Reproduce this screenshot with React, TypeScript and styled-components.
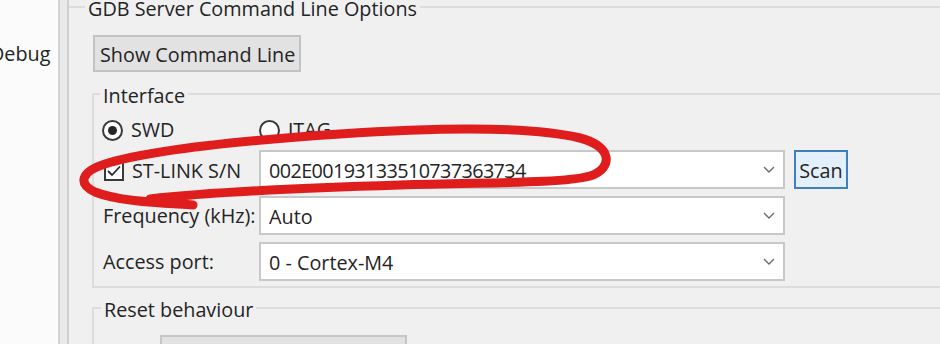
import React from "react";
import styled, { createGlobalStyle } from "styled-components";

const GlobalStyle = createGlobalStyle`
  html, body { margin: 0; padding: 0; background: #f0f0f0; }
  body {
    font-family: "Open Sans", "Noto Sans", "Liberation Sans", sans-serif;
    color: #242424;
  }
`;

const Frame = styled.div`
  position: relative;
  display: flex;
  width: 940px;
  height: 344px;
  overflow: hidden;
  background: #f0f0f0;
  font-size: 19.8px;
`;

const LeftPane = styled.div`
  flex: none;
  width: 58px;
  box-sizing: border-box;
  padding-top: 44px;
  background: #fbfbfb;
  overflow: hidden;
`;

const NavLabel = styled.div`
  line-height: 20px;
  text-indent: -10px;
  white-space: nowrap;
`;

const Sash = styled.div`
  flex: none;
  width: 11px;
  box-sizing: border-box;
  background: #e9e9e9;
  border-left: 2px solid #d3d3d3;
  border-right: 2px solid #d0d0d0;
`;

const Main = styled.div`
  flex: 1;
  min-width: 0;
  overflow: hidden;
  background: #f0f0f0;
`;

const Group = styled.fieldset<{ $top: number; $open?: boolean }>`
  margin: ${(p) => p.$top}px 0 0 0;
  padding: 0;
  min-width: 0;
  border: 2px solid #dcdcdc;
  border-right: none;
  ${(p) => (p.$open ? "border-left: none; border-bottom: none;" : "")}
`;

const Legend = styled.legend<{ $indent: number }>`
  margin-left: ${(p) => p.$indent}px;
  padding: 5px 3px 0;
  line-height: 20px;
  white-space: nowrap;
`;

const GdbBody = styled.div`
  padding-left: 23px;
`;

const ShowButton = styled.button`
  display: block;
  margin: 16px 0 0 1px;
  width: 208px;
  height: 37px;
  box-sizing: border-box;
  border: 2px solid #c3c3c3;
  background: #e2e2e2;
  padding: 3px 0 0 5px;
  font: inherit;
  line-height: 30px;
  color: inherit;
  text-align: left;
  white-space: nowrap;
  overflow: hidden;
`;

const GroupBody = styled.div<{ $pad: string }>`
  padding: ${(p) => p.$pad};
`;

const RadioRow = styled.div`
  display: grid;
  grid-template-columns: 157px 1fr;
  height: 22px;
  align-items: center;
`;

const Radio = styled.label`
  display: flex;
  align-items: center;
  gap: 8px;
  line-height: 20px;
  white-space: nowrap;
`;

const RadioCircle = styled.span<{ $checked?: boolean }>`
  display: grid;
  place-items: center;
  width: 21px;
  height: 21px;
  box-sizing: border-box;
  border: 2px solid #3a3a3a;
  border-radius: 50%;
  background: #fff;
  &::after {
    content: "";
    width: 9px;
    height: 9px;
    border-radius: 50%;
    background: ${(p) => (p.$checked ? "#262626" : "transparent")};
  }
`;

const FieldGrid = styled.div`
  display: grid;
  grid-template-columns: 148px 526px 54px;
  grid-auto-rows: 39px;
  column-gap: 9px;
  row-gap: 7px;
  margin-top: 9px;
  align-items: center;
`;

const FieldLabel = styled.span`
  padding-left: 1px;
  line-height: 20px;
  white-space: nowrap;
`;

const CheckLabel = styled.label`
  display: flex;
  align-items: center;
  gap: 8px;
  padding-left: 2px;
  padding-top: 2px;
  line-height: 20px;
  white-space: nowrap;
`;

const CheckBox = styled.span`
  display: grid;
  place-items: center;
  width: 20px;
  height: 20px;
  box-sizing: border-box;
  border: 2px solid #3a3a3a;
  background: #fff;
`;

const Combo = styled.div`
  display: flex;
  align-items: center;
  justify-content: space-between;
  height: 39px;
  box-sizing: border-box;
  border: 2px solid #c8c8c8;
  background: #fff;
  padding: 0 8px 0 8px;
`;

const ComboValue = styled.span<{ $tight?: boolean }>`
  padding-top: 2px;
  line-height: 35px;
  white-space: nowrap;
  letter-spacing: ${(p) => (p.$tight ? "-0.6px" : "0")};
`;

const ScanButton = styled.button`
  height: 39px;
  width: 54px;
  box-sizing: border-box;
  border: 2px solid #3f7fbd;
  background: #e3effa;
  padding: 2px 0 0;
  font: inherit;
  line-height: 33px;
  color: inherit;
`;

const ResetSelect = styled.div`
  margin-top: 15px;
  width: 247px;
  height: 30px;
  box-sizing: border-box;
  border: 2px solid #c6c6c6;
  background: #e2e2e2;
`;

const Annotation = styled.svg`
  position: absolute;
  left: 0;
  top: 0;
  pointer-events: none;
`;

const Chevron = () => (
  <svg width="12" height="7" viewBox="0 0 12 7">
    <path d="M1 1 L6 6 L11 1" fill="none" stroke="#6a6a6a" strokeWidth="1.4" />
  </svg>
);

const Check = () => (
  <svg width="14" height="12" viewBox="0 0 14 12">
    <path d="M1 6 L5 10 L13 1.5" fill="none" stroke="#2a2a2a" strokeWidth="1.8" />
  </svg>
);

type Field = { label: React.ReactNode; value: string; tight?: boolean; scan?: boolean };

export default function App() {
  const fields: Field[] = [
    {
      label: (
        <CheckLabel>
          <CheckBox>
            <Check />
          </CheckBox>
          ST-LINK S/N
        </CheckLabel>
      ),
      value: "002E00193133510737363734",
      tight: true,
      scan: true,
    },
    { label: <FieldLabel>Frequency (kHz):</FieldLabel>, value: "Auto" },
    { label: <FieldLabel>Access port:</FieldLabel>, value: "0 - Cortex-M4" },
  ];

  return (
    <>
      <GlobalStyle />
      <Frame>
        <LeftPane>
          <NavLabel>Debug</NavLabel>
        </LeftPane>
        <Sash />
        <Main>
          <Group $top={-6} $open>
            <Legend $indent={16}>GDB Server Command Line Options</Legend>
            <GdbBody>
              <ShowButton>Show Command Line</ShowButton>
              <Group $top={9}>
                <Legend $indent={6}>Interface</Legend>
                <GroupBody $pad="13px 0 5px 8px">
                  <RadioRow>
                    <Radio>
                      <RadioCircle $checked />
                      SWD
                    </Radio>
                    <Radio>
                      <RadioCircle />
                      JTAG
                    </Radio>
                  </RadioRow>
                  <FieldGrid>
                    {fields.map((f, i) => (
                      <React.Fragment key={i}>
                        {f.label}
                        <Combo>
                          <ComboValue $tight={f.tight}>{f.value}</ComboValue>
                          <Chevron />
                        </Combo>
                        {f.scan ? <ScanButton>Scan</ScanButton> : <span />}
                      </React.Fragment>
                    ))}
                  </FieldGrid>
                </GroupBody>
              </Group>
              <Group $top={7}>
                <Legend $indent={7}>Reset behaviour</Legend>
                <GroupBody $pad="0 0 0 66px">
                  <ResetSelect />
                </GroupBody>
              </Group>
            </GdbBody>
          </Group>
        </Main>
        <Annotation width="940" height="344" viewBox="0 0 940 344">
          <path
            d="M 193 205 C 165 203, 120 202, 95 192 C 78 184, 80 172, 105 164 C 150 150, 250 140, 340 134 C 430 128, 530 126, 580 138 C 612 146, 614 168, 590 176 C 560 184, 480 182, 400 185 C 300 188, 210 192, 150 199"
            fill="none"
            stroke="#e01d1d"
            strokeWidth="9"
            strokeLinecap="round"
            strokeLinejoin="round"
          />
        </Annotation>
      </Frame>
    </>
  );
}
